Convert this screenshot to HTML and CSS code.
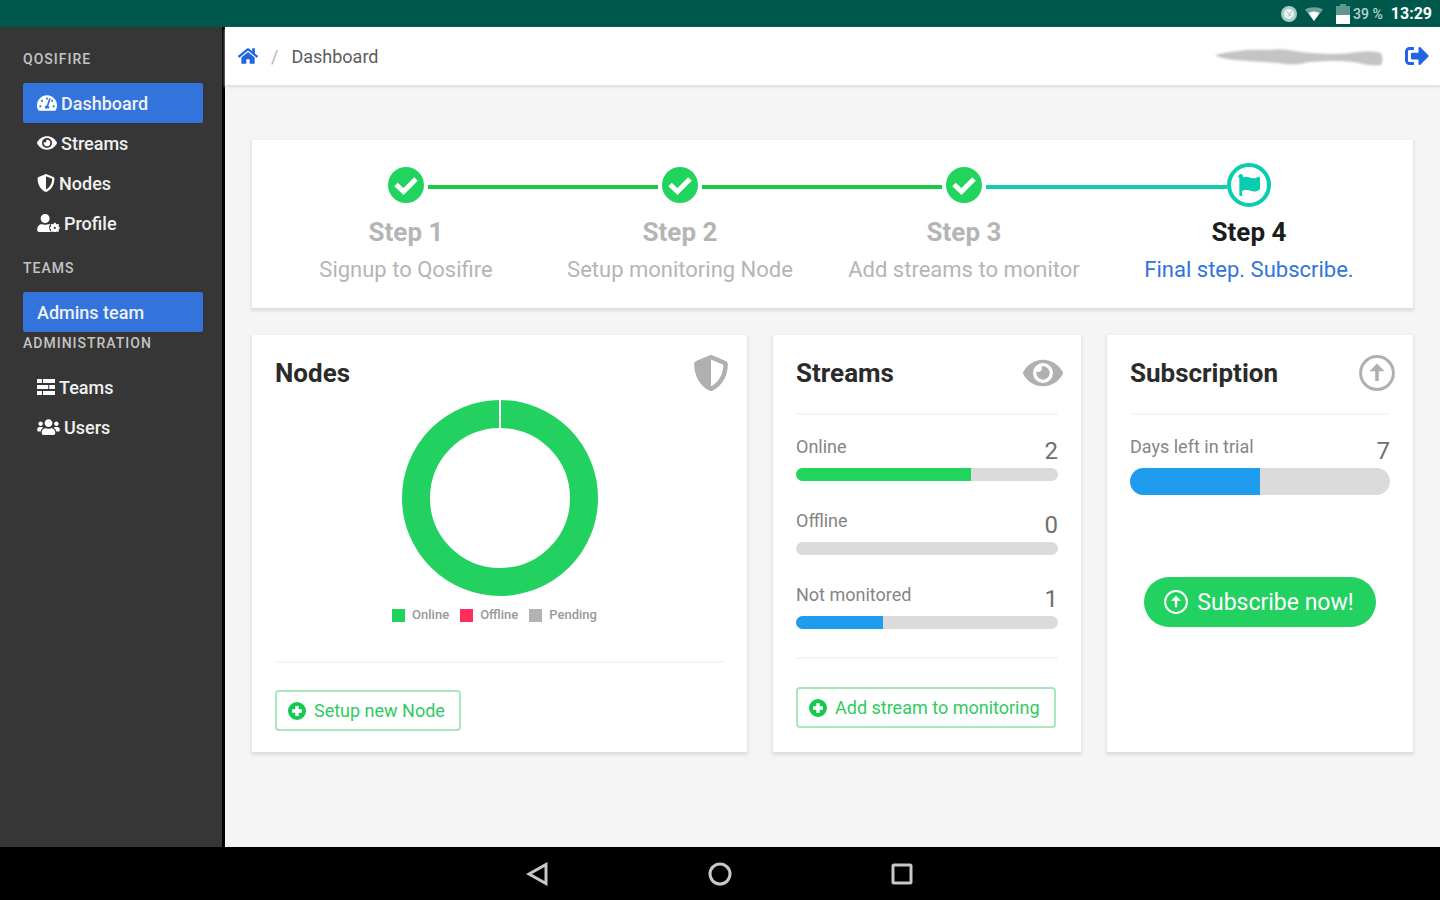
FILE: index.html
```html
<!DOCTYPE html>
<html lang="en">
<head>
<meta charset="utf-8">
<meta name="viewport" content="width=device-width, initial-scale=1">
<title>Qosifire - Dashboard</title>
<link rel="stylesheet" href="styles.css">
</head>
<body>
<svg class="sprite" aria-hidden="true">
  <symbol id="i-gauge" viewBox="0 0 576 512"><path d="M288 32C128.94 32 0 160.94 0 320c0 52.8 14.25 102.26 39.06 144.8 5.61 9.62 16.3 15.2 27.44 15.2h443c11.14 0 21.83-5.58 27.44-15.2C561.75 422.26 576 372.8 576 320c0-159.06-128.94-288-288-288zm0 64c14.71 0 26.58 10.13 30.32 23.65-1.11 2.26-2.64 4.23-3.45 6.67l-9.22 27.67c-5.13 3.49-10.97 6.01-17.64 6.01-17.67 0-32-14.33-32-32S270.33 96 288 96zM96 384c-17.67 0-32-14.33-32-32s14.33-32 32-32 32 14.33 32 32-14.33 32-32 32zm48-160c-17.67 0-32-14.33-32-32s14.33-32 32-32 32 14.33 32 32-14.33 32-32 32zm246.77-72.41l-61.33 184C343.13 347.33 352 364.54 352 384c0 11.72-3.38 22.55-8.88 32H232.88c-5.5-9.45-8.88-20.28-8.88-32 0-33.94 26.5-61.43 59.9-63.59l61.34-184.01c4.17-12.56 17.73-19.45 30.36-15.17 12.57 4.19 19.35 17.79 15.17 30.36zm14.66 57.2l15.52-46.55c3.47-1.29 7.13-2.23 11.05-2.23 17.67 0 32 14.33 32 32s-14.33 32-32 32c-11.38-.01-20.89-6.28-26.57-15.22zM480 384c-17.67 0-32-14.33-32-32s14.33-32 32-32 32 14.33 32 32-14.33 32-32 32z"/></symbol>
  <symbol id="i-eye" viewBox="0 0 576 512"><path d="M572.52 241.4C518.29 135.59 410.93 64 288 64S57.68 135.64 3.48 241.41a32.35 32.35 0 0 0 0 29.19C57.71 376.41 165.07 448 288 448s230.32-71.64 284.52-177.41a32.35 32.35 0 0 0 0-29.19zM288 400a144 144 0 1 1 144-144 143.93 143.93 0 0 1-144 144zm0-240a95.31 95.31 0 0 0-25.31 3.79 47.85 47.85 0 0 1-66.9 66.9A95.78 95.78 0 1 0 288 160z"/></symbol>
  <symbol id="i-shield" viewBox="0 0 512 512"><path d="M466.5 83.7l-192-80a48.15 48.15 0 0 0-36.9 0l-192 80C27.7 91.1 16 108.6 16 128c0 198.5 114.5 335.7 221.5 380.3 11.8 4.9 25.1 4.9 36.9 0C360.1 472.6 496 349.3 496 128c0-19.4-11.7-36.9-29.5-44.3zM256.1 446.3l-.1-381 175.9 73.3c-3.3 151.4-82.1 261.1-175.8 307.7z"/></symbol>
  <symbol id="i-user-cog" viewBox="0 0 640 512"><path d="M224 256a128 128 0 1 0 0-256 128 128 0 0 0 0 256zM134 288C60 288 0 348 0 422v42c0 27 21 48 48 48h352c-30-30-62-70-62-130 0-40 14-72 34-94h-74c-46 22-102 22-148 0z"/><path fill-rule="evenodd" d="M476 250h48l8 32 26 12 32-16 32 34-16 32 8 20 26 10v44l-26 10-8 22 14 30-32 32-32-14-24 12-10 28h-44l-10-28-24-12-32 14-32-32 14-30-8-22-26-10v-44l26-10 8-20-16-32 32-34 32 16 26-12zm24 116a30 30 0 1 0 0 60 30 30 0 0 0 0-60z"/></symbol>
  <symbol id="i-sliders" viewBox="0 0 512 512"><path d="M0 30h140v112H0zM170 30h342v112H170zM0 200h320v112H0zM350 200h162v112H350zM0 370h140v112H0zM170 370h342v112H170z"/></symbol>
  <symbol id="i-users" viewBox="0 0 640 512"><path d="M96 224c35.3 0 64-28.7 64-64s-28.7-64-64-64-64 28.7-64 64 28.7 64 64 64zm448 0c35.3 0 64-28.7 64-64s-28.7-64-64-64-64 28.7-64 64 28.7 64 64 64zm32 32h-64c-17.6 0-33.5 7.1-45.1 18.6 40.3 22.1 68.9 62 75.1 109.4h66c17.7 0 32-14.3 32-32v-32c0-35.3-28.7-64-64-64zm-256 0c61.9 0 112-50.1 112-112S381.9 32 320 32 208 82.1 208 144s50.1 112 112 112zm76.8 32h-8.3c-20.8 10-43.9 16-68.5 16s-47.6-6-68.5-16h-8.3C179.6 288 128 339.6 128 403.2V432c0 26.5 21.5 48 48 48h288c26.5 0 48-21.5 48-48v-28.8c0-63.6-51.6-115.2-115.2-115.2zm-223.7-13.4C161.5 263.1 145.6 256 128 256H64c-35.3 0-64 28.7-64 64v32c0 17.7 14.3 32 32 32h65.900c6.300-47.400 34.900-87.300 75.200-109.400z"/></symbol>
  <symbol id="i-home" viewBox="0 0 576 512"><path d="M280.37 148.26L96 300.11V464a16 16 0 0 0 16 16l112.06-.29a16 16 0 0 0 15.92-16V368a16 16 0 0 1 16-16h64a16 16 0 0 1 16 16v95.64a16 16 0 0 0 16 16.05L464 480a16 16 0 0 0 16-16V300L295.67 148.26a12.19 12.19 0 0 0-15.3 0zM571.6 251.47L488 182.56V44.05a12 12 0 0 0-12-12h-56a12 12 0 0 0-12 12v72.61L318.47 43a48 48 0 0 0-61 0L4.34 251.47a12 12 0 0 0-1.6 16.9l25.5 31A12 12 0 0 0 45.15 301l235.22-193.74a12.19 12.19 0 0 1 15.3 0L530.9 301a12 12 0 0 0 16.9-1.6l25.5-31a12 12 0 0 0-1.7-16.93z"/></symbol>
  <symbol id="i-signout" viewBox="0 0 512 512"><path d="M497 273L329 441c-15 15-41 4.5-41-17v-96H152c-13.3 0-24-10.7-24-24v-96c0-13.3 10.7-24 24-24h136V88c0-21.4 25.9-32 41-17l168 168c9.3 9.4 9.3 24.6 0 34zM192 436v-40c0-6.6-5.4-12-12-12H96c-17.7 0-32-14.3-32-32V160c0-17.7 14.3-32 32-32h84c6.6 0 12-5.4 12-12V76c0-6.6-5.4-12-12-12H96c-53 0-96 43-96 96v192c0 53 43 96 96 96h84c6.6 0 12-5.4 12-12z"/></symbol>
  <symbol id="i-flag" viewBox="0 0 512 512"><path d="M349.565 98.783C295.978 98.783 251.721 64 184.348 64c-24.955 0-47.309 4.384-68.045 12.013a55.947 55.947 0 0 0 3.586-23.562C118.117 24.015 94.806 1.206 66.338.048 34.345-1.254 8 24.296 8 56c0 19.026 9.497 35.825 24 45.945V488c0 13.255 10.745 24 24 24h16c13.255 0 24-10.745 24-24v-94.4c28.311-12.064 63.582-22.122 114.435-22.122 53.588 0 97.844 34.783 165.217 34.783 48.169 0 86.667-16.294 122.505-40.858C506.84 359.452 512 349.571 512 339.045v-243.1c0-23.393-24.269-38.87-45.485-29.016-34.338 15.948-76.454 31.854-116.95 31.854z"/></symbol>
  <symbol id="i-check" viewBox="0 0 36 36"><circle cx="18" cy="18" r="18"/><path class="mark" d="M8 17.500l7.500 7L28 12"/></symbol>
  <symbol id="i-plus" viewBox="0 0 18 18"><path fill-rule="evenodd" d="M9 0a9 9 0 1 0 0 18A9 9 0 0 0 9 0zM7.300 4h3.400v3.300H14v3.400h-3.300V14H7.300v-3.300H4V7.300h3.300z"/></symbol>
  <symbol id="i-up" viewBox="0 0 36 36"><circle class="ring" cx="18" cy="18" r="16.400"/><path d="M18 8.500l7.500 7.800h-5.700V26h-3.600v-9.700h-5.700z"/></symbol>
</svg>

<div class="statusbar">
  <svg class="status-sync" viewBox="0 0 16 16" aria-hidden="true"><circle cx="8" cy="8" r="8" fill="#a9cdc7"/><circle cx="8" cy="8" r="5" fill="#e9f4f2"/><path d="M5.500 5.500l5 5M10.500 5.500l-3 5" stroke="#9cc4bd" fill="none"/></svg>
  <svg class="status-wifi" viewBox="0 0 18 14" aria-hidden="true"><path d="M0 2.500C5-.5 13-.5 18 2.500L9 14z" fill="#6da39b"/><path d="M3.500 6C7 4 11 4 14.500 6L9 14z" fill="#fff"/></svg>
  <span class="battery">
    <svg class="status-battery" viewBox="0 0 14 20" aria-hidden="true"><path d="M4 0h6v2h4v18H0V2h4z" fill="#5e978e"/><path d="M0 11h14v9H0z" fill="#fff"/></svg>
    39 %
  </span>
  <span class="clock">13:29</span>
</div>

<div class="app">
  <aside class="sidebar">
    <nav aria-label="Main">
      <h2 class="menu-label">Qosifire</h2>
      <ul class="menu-list">
        <li><a class="menu-link is-active" href="#"><svg class="w20"><use href="#i-gauge"/></svg>Dashboard</a></li>
        <li><a class="menu-link" href="#"><svg class="w20"><use href="#i-eye"/></svg>Streams</a></li>
        <li><a class="menu-link" href="#"><svg class="w18"><use href="#i-shield"/></svg>Nodes</a></li>
        <li><a class="menu-link" href="#"><svg class="w23"><use href="#i-user-cog"/></svg>Profile</a></li>
      </ul>
      <h2 class="menu-label">Teams</h2>
      <ul class="menu-list">
        <li><a class="menu-link is-active" href="#">Admins team</a></li>
      </ul>
      <h2 class="menu-label is-tight">Administration</h2>
      <ul class="menu-list">
        <li><a class="menu-link" href="#"><svg class="w18"><use href="#i-sliders"/></svg>Teams</a></li>
        <li><a class="menu-link" href="#"><svg class="w23"><use href="#i-users"/></svg>Users</a></li>
      </ul>
    </nav>
  </aside>

  <div class="page">
    <header class="topbar">
      <nav class="breadcrumb" aria-label="Breadcrumb">
        <a class="icon-link" href="#" aria-label="Home"><svg class="home"><use href="#i-home"/></svg></a>
        <span class="slash">/</span>
        <span>Dashboard</span>
      </nav>
      <div class="account">
        <svg class="scribble" viewBox="0 0 168 20" aria-hidden="true"><path d="M0 9C16 5 34 3 54 4c12-2 22 0 31 2 20 2 42 3 58 0 8-1 16-1 23 1q3 6 0 12c-7 1-14 0-22-2-15-3-32-2-50-1-10 3-20 3-31 1-18-1-30-2-44-3C11 13 5 12 0 9z"/></svg>
        <a class="icon-link" href="#" aria-label="Sign out"><svg class="signout"><use href="#i-signout"/></svg></a>
      </div>
    </header>

    <main class="content">
      <ol class="box steps">
        <li class="step">
          <div class="track"><i class="line is-hidden"></i><svg class="done"><use href="#i-check"/></svg><i class="line"></i></div>
          <h3 class="step-title">Step 1</h3><p class="step-text">Signup to Qosifire</p>
        </li>
        <li class="step">
          <div class="track"><i class="line"></i><svg class="done"><use href="#i-check"/></svg><i class="line"></i></div>
          <h3 class="step-title">Step 2</h3><p class="step-text">Setup monitoring Node</p>
        </li>
        <li class="step">
          <div class="track"><i class="line"></i><svg class="done"><use href="#i-check"/></svg><i class="line is-teal"></i></div>
          <h3 class="step-title">Step 3</h3><p class="step-text">Add streams to monitor</p>
        </li>
        <li class="step is-current">
          <div class="track"><i class="line is-teal"></i><span class="goal"><svg><use href="#i-flag"/></svg></span><i class="line is-hidden"></i></div>
          <h3 class="step-title">Step 4</h3><p class="step-text"><a href="#">Final step. Subscribe.</a></p>
        </li>
      </ol>

      <div class="cards">
        <section class="box card">
          <div class="card-head"><h2>Nodes</h2><svg class="head-icon"><use href="#i-shield"/></svg></div>
          <svg class="donut" viewBox="0 0 196 196" role="img" aria-label="All nodes online"><circle cx="98" cy="98" r="84"/><path d="M98 0v30"/></svg>
          <ul class="legend">
            <li><i class="swatch is-green"></i>Online</li>
            <li><i class="swatch is-red"></i>Offline</li>
            <li><i class="swatch is-grey"></i>Pending</li>
          </ul>
          <hr class="rule after-legend">
          <button class="btn-outline" type="button"><svg><use href="#i-plus"/></svg>Setup new Node</button>
        </section>

        <section class="box card">
          <div class="card-head"><h2>Streams</h2><svg class="head-icon is-wide"><use href="#i-eye"/></svg></div>
          <hr class="rule after-head">
          <div class="metric"><label for="m-on">Online</label><output for="m-on">2</output><progress id="m-on" class="is-green" value="2" max="3"></progress></div>
          <div class="metric"><label for="m-off">Offline</label><output for="m-off">0</output><progress id="m-off" value="0" max="3"></progress></div>
          <div class="metric"><label for="m-not">Not monitored</label><output for="m-not">1</output><progress id="m-not" value="1" max="3"></progress></div>
          <hr class="rule after-metrics">
          <button class="btn-outline" type="button"><svg><use href="#i-plus"/></svg>Add stream to monitoring</button>
        </section>

        <section class="box card">
          <div class="card-head"><h2>Subscription</h2><svg class="head-icon"><use href="#i-up"/></svg></div>
          <hr class="rule after-head">
          <div class="metric"><label for="m-days">Days left in trial</label><output for="m-days">7</output><progress id="m-days" class="is-large" value="7" max="14"></progress></div>
          <button class="btn-subscribe" type="button"><svg><use href="#i-up"/></svg>Subscribe now!</button>
        </section>
      </div>
    </main>
  </div>
</div>

<nav class="android-nav" aria-label="System">
  <button type="button" aria-label="Back"><svg viewBox="0 0 24 24"><path d="M20 2.500v19L3 12z"/></svg></button>
  <button type="button" aria-label="Home"><svg viewBox="0 0 24 24"><circle cx="12" cy="12" r="10"/></svg></button>
  <button type="button" aria-label="Recent apps"><svg viewBox="0 0 24 24"><rect x="3" y="3" width="18" height="18" rx="1"/></svg></button>
</nav>
</body>
</html>
```

FILE: styles.css
```css
* { box-sizing: border-box; }
body {
  margin: 0;
  min-height: 100vh;
  display: flex;
  flex-direction: column;
  background: #f5f5f5;
  color: #5c5c5c;
  font-family: Roboto, "Liberation Sans", sans-serif;
  font-size: 18px;
}
h2, h3, p, ul, ol { margin: 0; padding: 0; list-style: none; }
a { color: #3273dc; text-decoration: none; }
button { font-family: inherit; cursor: pointer; white-space: nowrap; }
svg { display: block; flex: none; fill: currentColor; }
.sprite { position: absolute; width: 0; height: 0; }
.mark { fill: none; stroke: #fff; stroke-width: 5; }
.ring { fill: none; stroke: currentColor; stroke-width: 3; }

.statusbar {
  display: flex;
  justify-content: flex-end;
  align-items: center;
  gap: 8px;
  height: 27px;
  padding-right: 8px;
  background: #00574b;
  color: #fff;
}
.status-sync { width: 16px; height: 16px; }
.status-wifi { width: 18px; height: 14px; margin-right: 5px; }
.battery { display: flex; align-items: center; gap: 3px; font-size: 14px; font-weight: 500; color: #b5d3ce; }
.status-battery { width: 14px; height: 20px; }
.clock { font-size: 16px; font-weight: 700; }

.app { display: flex; flex: 1; }
.sidebar {
  flex: none;
  width: 225px;
  padding: 23px 19px 23px 23px;
  background: #363636;
  border-right: 3px solid #000;
}
.menu-label {
  margin: 16px 0 15px;
  font-size: 14px;
  font-weight: 500;
  line-height: 18px;
  letter-spacing: 1px;
  text-transform: uppercase;
  color: #c4c4c4;
}
.menu-label:first-child { margin-top: 0; }
.menu-label.is-tight { margin-top: 2px; }
.menu-link {
  display: flex;
  align-items: center;
  gap: 4px;
  height: 40px;
  padding-left: 14px;
  border-radius: 2px;
  font-size: 18px;
  font-weight: 500;
  color: #f0f0f0;
}
.menu-link.is-active { background: #3273dc; }
.menu-link svg { height: 18px; color: #fff; }
.w18 { width: 18px; }
.w20 { width: 20px; }
.w23 { width: 23px; }

.page { flex: 1; min-width: 0; }
.topbar {
  display: flex;
  justify-content: space-between;
  align-items: center;
  height: 58px;
  padding: 0 11px 0 13px;
  background: #fff;
  box-shadow: 0 2px 3px #dedede;
}
.breadcrumb { display: flex; align-items: center; gap: 13px; }
.slash { color: #b5b5b5; }
.icon-link { color: #2166e0; }
.home { width: 20px; height: 18px; }
.account { display: flex; align-items: center; gap: 22px; }
.scribble { width: 168px; height: 20px; color: #c4c4c4; filter: blur(1px); }
.signout { width: 24px; height: 24px; }

.content { padding: 55px 27px 27px; }
.box { background: #fff; box-shadow: 0 2px 3px 1px #dedede; }
.steps {
  display: grid;
  grid-template-columns: 278fr 270fr 298fr 272fr;
  padding: 23px 28px 22px 15px;
}
.step { text-align: center; color: #b5b5b5; }
.track { display: flex; align-items: center; gap: 4px; height: 44px; }
.line { flex: 1; height: 4px; margin-top: 4px; background: #1cc943; }
.line.is-teal { background: #12cfa9; }
.line.is-hidden { background: none; }
.done { width: 36px; height: 36px; color: #20d45d; }
.goal {
  display: flex;
  align-items: center;
  justify-content: center;
  width: 44px;
  height: 44px;
  margin: 0 -4px;
  border: 4px solid #09cdb0;
  border-radius: 50%;
  color: #09cdb0;
}
.goal svg { width: 22px; height: 22px; }
.step-title { margin-top: 9px; font-size: 26px; font-weight: 700; line-height: 32px; }
.step-text { margin-top: 6px; font-size: 22px; line-height: 32px; }
.is-current .step-title { color: #1c1c1c; }

.cards {
  display: grid;
  grid-template-columns: 495fr 308fr 306fr;
  gap: 26px;
  margin-top: 27px;
}
.card { padding: 23px 23px 21px; }
.card-head { display: flex; justify-content: space-between; align-items: center; height: 30px; margin-right: -5px; }
.card-head h2 { font-size: 26px; font-weight: 700; line-height: 30px; color: #2b2b2b; }
.head-icon { width: 36px; height: 36px; color: #b0b0b0; }
.head-icon.is-wide { width: 40px; }
.rule { height: 2px; border: 0; background: #f5f5f5; }
.after-head { margin: 25px 0 20px; }
.after-legend { margin: 37px 0 27px; }
.after-metrics { margin: 0 0 28px; }
.donut { width: 196px; height: 196px; margin: 12px auto 10px; }
.donut circle { fill: none; stroke: #23d160; stroke-width: 28; }
.donut path { stroke: #fff; stroke-width: 2; }
.legend { display: flex; justify-content: center; gap: 11px; padding-right: 10px; font-size: 13px; font-weight: 500; line-height: 18px; color: #999; }
.legend li { display: flex; align-items: center; gap: 7px; }
.swatch { width: 13px; height: 13px; }
.swatch.is-green { background: #20d25c; }
.swatch.is-red { background: #ff2e5b; }
.swatch.is-grey { background: #b3b3b3; }

.metric { display: grid; grid-template-columns: 1fr auto; margin-bottom: 28px; color: #858585; }
.metric label { line-height: 24px; }
.metric output { font-size: 24px; line-height: 33px; color: #707070; }
progress {
  grid-column: 1 / -1;
  appearance: none;
  display: block;
  width: 100%;
  height: 13px;
  border: 0;
  border-radius: 14px;
  overflow: hidden;
  background: #dbdbdb;
}
progress.is-large { height: 27px; }
progress::-webkit-progress-bar { background: #dbdbdb; }
progress::-webkit-progress-value { background: #209cee; }
progress.is-green::-webkit-progress-value { background: #20d45d; }

.btn-outline {
  display: flex;
  align-items: center;
  gap: 8px;
  height: 41px;
  padding: 0 14px 0 11px;
  border: 2px solid #a9e8bb;
  border-radius: 4px;
  background: #fff;
  font-size: 18px;
  color: #2fcb62;
}
.btn-outline svg { width: 18px; height: 18px; color: #14c94e; }
.btn-subscribe {
  display: flex;
  align-items: center;
  gap: 9px;
  height: 50px;
  margin: 82px auto 0;
  padding: 0 22px 0 20px;
  border: 0;
  border-radius: 25px;
  background: #23d160;
  font-size: 23px;
  color: #fff;
}
.btn-subscribe svg { width: 24px; height: 24px; }

.android-nav { display: flex; justify-content: center; align-items: center; gap: 158px; height: 53px; background: #000; }
.android-nav button { width: 24px; height: 24px; padding: 0; border: 0; background: none; color: #c8c8c8; }
.android-nav svg { width: 24px; height: 24px; fill: none; stroke: currentColor; stroke-width: 3; }
```
